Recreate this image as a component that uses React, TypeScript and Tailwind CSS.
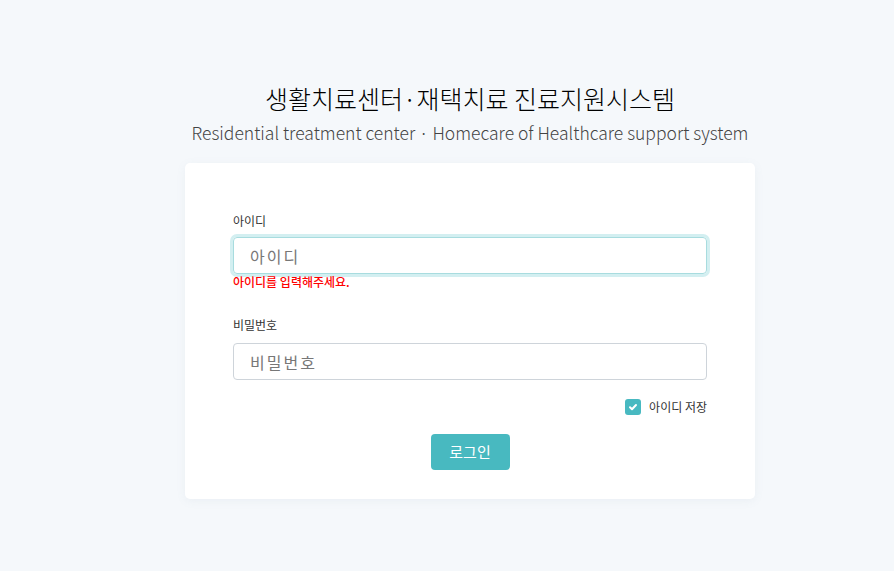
export default function App() {
  return (
    <main
      className="min-h-screen w-full bg-[#f5f8fb] flex flex-col items-center pt-[80px] pl-[46px]"
      style={{ fontFamily: '"Noto Sans CJK KR", "Noto Sans", sans-serif' }}
    >
      <h1 className="text-[25px] leading-[36px] text-black font-light">생활치료센터·재택치료 진료지원시스템</h1>
      <p className="mt-[2px] text-[17.5px] leading-[30px] font-light text-[#444]">
        Residential treatment center · Homecare of Healthcare support system
      </p>

      <div className="mt-[15px] w-[570px] bg-white rounded-[5px] shadow-[0_2px_10px_rgba(120,140,170,0.08)] px-[48px] pt-[49px] pb-[29px]">
        <label className="block text-[12px] leading-[18px] text-[#333]">아이디</label>
        <input
          autoFocus
          placeholder="아이디"
          className="mt-[7px] w-full h-[37px] rounded-[4px] border border-[#a8dcdf] ring-[3px] ring-[#d3eff1] px-[16px] text-[16px] tracking-[2px] text-[#333] placeholder:text-[#777] outline-none"
        />
        <p className="mt-[-1px] text-[12px] leading-[18px] text-[#ff0000] font-medium">아이디를 입력해주세요.</p>

        <label className="mt-[25px] block text-[12px] leading-[18px] text-[#333]">비밀번호</label>
        <input
          type="text"
          placeholder="비밀번호"
          className="mt-[9px] w-full h-[37px] rounded-[4px] border border-[#ced4da] px-[16px] text-[16px] tracking-[2px] text-[#333] placeholder:text-[#777] outline-none"
        />

        <div className="mt-[18px] flex justify-end items-center gap-[8px]">
          <span className="w-[16px] h-[16px] rounded-[3px] bg-[#48b9c1] flex items-center justify-center">
            <svg width="10" height="10" viewBox="0 0 10 10" fill="none" stroke="white" strokeWidth="2" strokeLinecap="round" strokeLinejoin="round">
              <path d="M2 5.3l2 2 4-4.3" />
            </svg>
          </span>
          <span className="text-[12px] leading-[18px] text-[#333]">아이디 저장</span>
        </div>

        <div className="mt-[18px] flex justify-center">
          <button className="w-[79px] h-[36px] rounded-[4px] bg-[#48b9c0] text-white text-[15px]">로그인</button>
        </div>
      </div>
    </main>
  );
}
